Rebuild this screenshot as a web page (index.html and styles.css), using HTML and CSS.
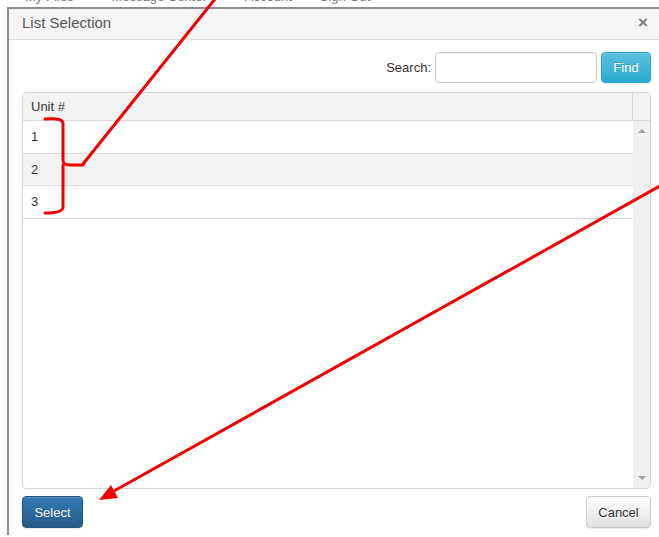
FILE: index.html
```html
<!DOCTYPE html>
<html lang="en">
<head>
<meta charset="utf-8">
<title>List Selection</title>
<link rel="stylesheet" href="styles.css">
</head>
<body>
  <div class="site-nav">
    <div class="site-nav-links">
      <span>My Files</span>
      <span>Message Center</span>
      <span>Account</span>
      <span class="last">Sign Out</span>
    </div>
  </div>

  <div class="modal">
    <div class="modal-header">
      <span class="modal-title">List Selection</span>
      <span class="modal-close">&times;</span>
    </div>

    <div class="modal-body">
      <div class="search-row">
        <label class="search-label" for="q">Search:</label>
        <input class="search-input" id="q" type="text">
        <button class="btn btn-info">Find</button>
      </div>

      <div class="grid">
        <div class="grid-head">
          <div class="grid-head-cell">Unit #</div>
          <div class="grid-head-spacer"></div>
        </div>
        <div class="grid-body">
          <div class="grid-rows">
            <div class="grid-row">1</div>
            <div class="grid-row alt">2</div>
            <div class="grid-row">3</div>
          </div>
          <div class="scrollbar">
            <span class="arrow-up"></span>
            <span class="arrow-down"></span>
          </div>
        </div>
      </div>
    </div>

    <div class="modal-footer">
      <button class="btn btn-primary">Select</button>
      <button class="btn btn-default">Cancel</button>
    </div>
  </div>

  <svg class="markup" width="659" height="537" viewBox="0 0 659 537">
    <g fill="none" stroke="#f20000" stroke-width="3" stroke-linecap="round" stroke-linejoin="round">
      <path d="M45 119 C57 118 63 119 63 124 L63 160 C63 164 65 165 70 165 L83 165"/>
      <path d="M63 165 L63 207 C63 211 58 213 45 213"/>
      <path d="M83 164 L215 -1"/>
      <path d="M660 186 L114 491"/>
    </g>
    <polygon points="99,500 111,485 118,498" fill="#f20000"/>
  </svg>
</body>
</html>
```

FILE: styles.css
```css
html, body {
  margin: 0;
  padding: 0;
}

body {
  width: 659px;
  height: 537px;
  overflow: hidden;
  position: relative;
  background: #fff;
  font-family: "Liberation Sans", Arial, sans-serif;
  font-size: 13px;
  color: #333;
}

/* page navigation peeking above the dialog */
.site-nav {
  height: 7px;
  overflow: hidden;
}

.site-nav-links {
  display: flex;
  gap: 38px;
  margin-top: -11px;
  padding-left: 25px;
  font-size: 13px;
  color: #777;
  white-space: nowrap;
}

.site-nav-links .last {
  margin-left: -10px;
}

/* dialog */
.modal {
  margin-left: 7px;
  width: 655px;
  border-left: 2px solid #8c8c8c;
  border-top: 2px solid #8c8c8c;
  background: #fff;
}

.modal-header {
  box-sizing: border-box;
  height: 31px;
  display: flex;
  align-items: center;
  justify-content: space-between;
  padding: 0 16px 3px 13px;
  background: #f5f5f5;
  border-bottom: 1px solid #dedede;
}

.modal-title {
  font-size: 15px;
  color: #555;
}

.modal-close {
  font-size: 17px;
  font-weight: bold;
  color: #7a7a7a;
  line-height: 1;
}

.modal-body {
  padding: 12px 13px 0;
}

.search-row {
  display: flex;
  justify-content: flex-end;
  align-items: center;
  gap: 4px;
  height: 31px;
}

.search-label {
  font-size: 13px;
  color: #333;
}

.search-input {
  box-sizing: border-box;
  width: 162px;
  height: 31px;
  margin: 0;
  border: 1px solid #ccc;
  border-radius: 4px;
  box-shadow: inset 0 1px 1px rgba(0, 0, 0, .075);
  font: inherit;
  padding: 0 8px;
}

/* buttons */
.btn {
  box-sizing: border-box;
  height: 32px;
  margin: 0;
  border: 1px solid transparent;
  border-radius: 4px;
  padding: 0;
  font-family: "Liberation Sans", Arial, sans-serif;
  font-size: 13px;
  cursor: pointer;
}

.btn-info {
  width: 50px;
  height: 31px;
  color: #fff;
  background-image: linear-gradient(to bottom, #5bc0de 0, #2aabd2 100%);
  border-color: #28a4c9;
  text-shadow: 0 -1px 0 rgba(0, 0, 0, .2);
  box-shadow: inset 0 1px 0 rgba(255, 255, 255, .15), 0 1px 1px rgba(0, 0, 0, .075);
}

.btn-primary {
  width: 61px;
  color: #fff;
  background-image: linear-gradient(to bottom, #337ab7 0, #265a88 100%);
  border-color: #245580;
  text-shadow: 0 -1px 0 rgba(0, 0, 0, .2);
  box-shadow: inset 0 1px 0 rgba(255, 255, 255, .15), 0 1px 1px rgba(0, 0, 0, .075);
}

.btn-default {
  width: 65px;
  color: #333;
  background-image: linear-gradient(to bottom, #fff 0, #e0e0e0 100%);
  border-color: #ccc;
  text-shadow: 0 1px 0 #fff;
  box-shadow: inset 0 1px 0 rgba(255, 255, 255, .15), 0 1px 1px rgba(0, 0, 0, .075);
}

/* list grid */
.grid {
  box-sizing: border-box;
  height: 397px;
  margin-top: 9px;
  border: 1px solid #d6d6d6;
  border-radius: 4px;
  display: flex;
  flex-direction: column;
  overflow: hidden;
}

.grid-head {
  display: flex;
  height: 27px;
  background: #f3f3f3;
  border-bottom: 1px solid #d9d9d9;
}

.grid-head-cell {
  flex: 1;
  display: flex;
  align-items: center;
  padding-left: 8px;
  color: #333;
}

.grid-head-spacer {
  width: 17px;
  border-left: 1px solid #d9d9d9;
}

.grid-body {
  flex: 1;
  display: flex;
  min-height: 0;
}

.grid-rows {
  flex: 1;
}

.grid-row {
  box-sizing: border-box;
  height: 32.5px;
  display: flex;
  align-items: center;
  padding-left: 8px;
  border-bottom: 1px solid #dcdcdc;
  color: #333;
}

.grid-row.alt {
  background: #f3f3f3;
}

.scrollbar {
  width: 17px;
  background: #f0f0f0;
  display: flex;
  flex-direction: column;
  justify-content: space-between;
  align-items: center;
  padding: 8px 0 8px;
  box-sizing: border-box;
}

.arrow-up {
  width: 0;
  height: 0;
  border-left: 4px solid transparent;
  border-right: 4px solid transparent;
  border-bottom: 4px solid #a3a3a3;
}

.arrow-down {
  width: 0;
  height: 0;
  border-left: 4px solid transparent;
  border-right: 4px solid transparent;
  border-top: 4px solid #a3a3a3;
}

.modal-footer {
  display: flex;
  justify-content: space-between;
  padding: 7px 13px;
}

/* red annotation strokes drawn over the dialog */
.markup {
  position: absolute;
  top: 0;
  left: 0;
  pointer-events: none;
}
```
